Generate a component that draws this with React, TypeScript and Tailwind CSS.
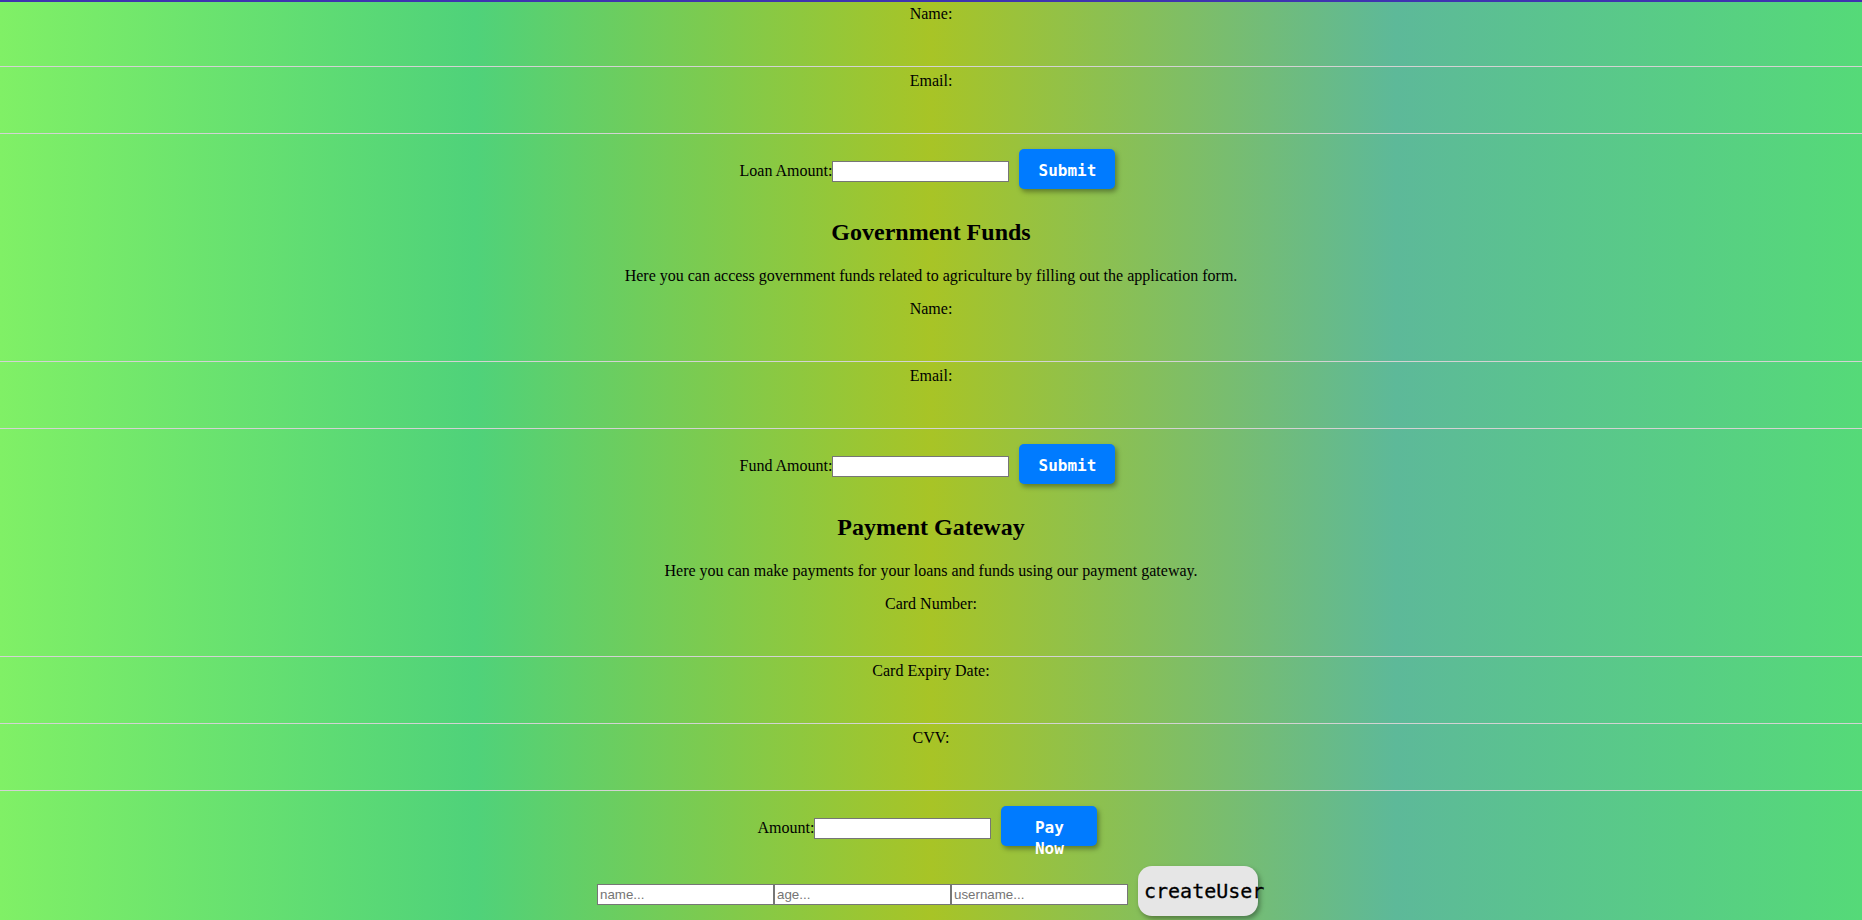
import React from "react";

const mono = "font-['DejaVu_Sans_Mono','Liberation_Mono',monospace]";

function Field({ label, className = "" }: { label: string; className?: string }) {
  return (
    <div className={className}>
      <div className="h-[18px] leading-[18px]">{label}</div>
      <div className="h-[44px] border-b border-[#d3d3d3]" />
    </div>
  );
}

function AmountRow({ label, action, className = "" }: { label: string; action: string; className?: string }) {
  return (
    <div className={`flex items-start justify-center pl-[3px] ${className}`}>
      <span className="mt-[13px] h-[18px] leading-[18px]">{label}</span>
      <input
        type="number"
        className="mt-[12px] h-[21px] w-[177px] border border-[#767676] bg-white px-[2px] outline-none"
      />
      <button
        className={`mx-[10px] flex h-10 w-24 shrink-0 flex-col items-center justify-start overflow-visible rounded-[5px] bg-[#007bff] px-5 pt-[11px] text-center text-[16px] font-bold leading-[21px] text-white shadow-[2px_3px_5px_rgba(0,0,0,0.35)] ${mono}`}
      >
        {action}
      </button>
    </div>
  );
}

function Section({ title, text }: { title: string; text: string }) {
  return (
    <>
      <h2 className="mt-[29px] h-[28px] text-[24px] font-bold leading-[28px]">{title}</h2>
      <p className="mt-[21px] h-[18px] leading-[18px]">{text}</p>
    </>
  );
}

export default function App() {
  return (
    <div className="h-screen overflow-hidden bg-[linear-gradient(90deg,#80f066_0%,#4fd27a_25.5%,#a8c426_50%,#5db999_75%,#55da78_100%)] text-center font-['Liberation_Serif','Times_New_Roman',serif] text-[16px] text-black">
      <div className="h-[2px] bg-[#3f33b0]" />

      {/* loans */}
      <Field label="Name:" className="mt-[3px]" />
      <Field label="Email:" className="mt-[5px]" />
      <AmountRow label="Loan Amount:" action="Submit" className="mt-[15px]" />

      {/* government funds */}
      <Section
        title="Government Funds"
        text="Here you can access government funds related to agriculture by filling out the application form."
      />
      <Field label="Name:" className="mt-[15px]" />
      <Field label="Email:" className="mt-[5px]" />
      <AmountRow label="Fund Amount:" action="Submit" className="mt-[15px]" />

      {/* payment */}
      <Section
        title="Payment Gateway"
        text="Here you can make payments for your loans and funds using our payment gateway."
      />
      <Field label="Card Number:" className="mt-[15px]" />
      <Field label="Card Expiry Date:" className="mt-[5px]" />
      <Field label="CVV:" className="mt-[5px]" />
      <AmountRow label="Amount:" action="Pay Now" className="mt-[15px]" />

      {/* create user */}
      <div className="mt-[20px] flex items-start justify-center pl-[3px]">
        {["name...", "age...", "username..."].map((ph) => (
          <input
            key={ph}
            type="text"
            placeholder={ph}
            className="mt-[18px] h-[21px] w-[177px] border border-[#767676] bg-white px-[2px] font-['Liberation_Sans',Arial,sans-serif] text-[13.33px] outline-none placeholder:text-[#757575]"
          />
        ))}
        <button
          className={`mx-[10px] flex h-[50px] w-[120px] shrink-0 items-center overflow-visible whitespace-nowrap rounded-[14px] bg-[#e6e6e6] pl-[6px] text-[20px] text-black shadow-[2px_3px_5px_rgba(0,0,0,0.35)] [-webkit-text-stroke:0.3px_black] ${mono}`}
        >
          createUser
        </button>
      </div>
    </div>
  );
}
